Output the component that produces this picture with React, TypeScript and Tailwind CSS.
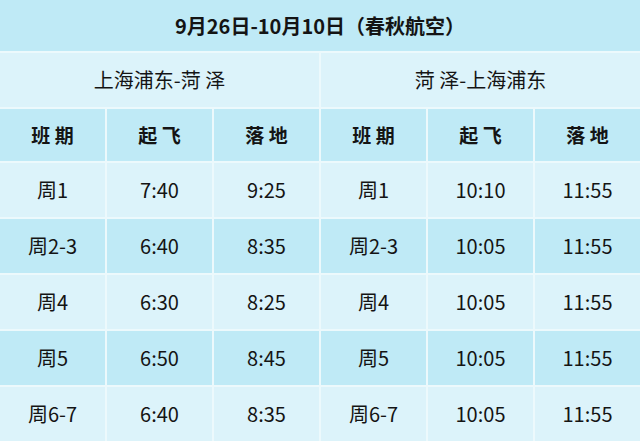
import React from "react";

const rows = [
  ["周1", "7:40", "9:25", "周1", "10:10", "11:55"],
  ["周2-3", "6:40", "8:35", "周2-3", "10:05", "11:55"],
  ["周4", "6:30", "8:25", "周4", "10:05", "11:55"],
  ["周5", "6:50", "8:45", "周5", "10:05", "11:55"],
  ["周6-7", "6:40", "8:35", "周6-7", "10:05", "11:55"],
];

const heads = ["班 期", "起 飞", "落 地", "班 期", "起 飞", "落 地"];

export default function App() {
  const font = { fontFamily: '"Noto Sans CJK SC", "Noto Sans", sans-serif' };
  return (
    <div
      className="w-[640px] h-[441px] bg-[#ecf9fc] flex flex-col gap-[2px] overflow-hidden text-[#141414]"
      style={font}
    >
      <div className="h-[51px] shrink-0 bg-[#bfeaf6] flex items-center justify-center text-[20px] font-bold">
        9月26日-10月10日（春秋航空）
      </div>
      <div className="h-[54px] shrink-0 grid grid-cols-2 gap-[2px]">
        <div className="bg-[#dcf3fa] flex items-center justify-center text-[20px]">上海浦东-菏 泽</div>
        <div className="bg-[#dcf3fa] flex items-center justify-center text-[20px]">菏 泽-上海浦东</div>
      </div>
      <div className="h-[52px] shrink-0 grid grid-cols-6 gap-[2px]">
        {heads.map((h, i) => (
          <div key={i} className="bg-[#bfeaf6] flex items-center justify-center text-[19px] font-bold">
            {h}
          </div>
        ))}
      </div>
      {rows.map((r, ri) => (
        <div key={ri} className="flex-1 grid grid-cols-6 gap-[2px]">
          {r.map((c, ci) => (
            <div
              key={ci}
              className={
                "flex items-center justify-center text-[20px] " +
                (ri % 2 === 0 ? "bg-[#dcf3fa]" : "bg-[#bfeaf6]")
              }
            >
              {c}
            </div>
          ))}
        </div>
      ))}
    </div>
  );
}
